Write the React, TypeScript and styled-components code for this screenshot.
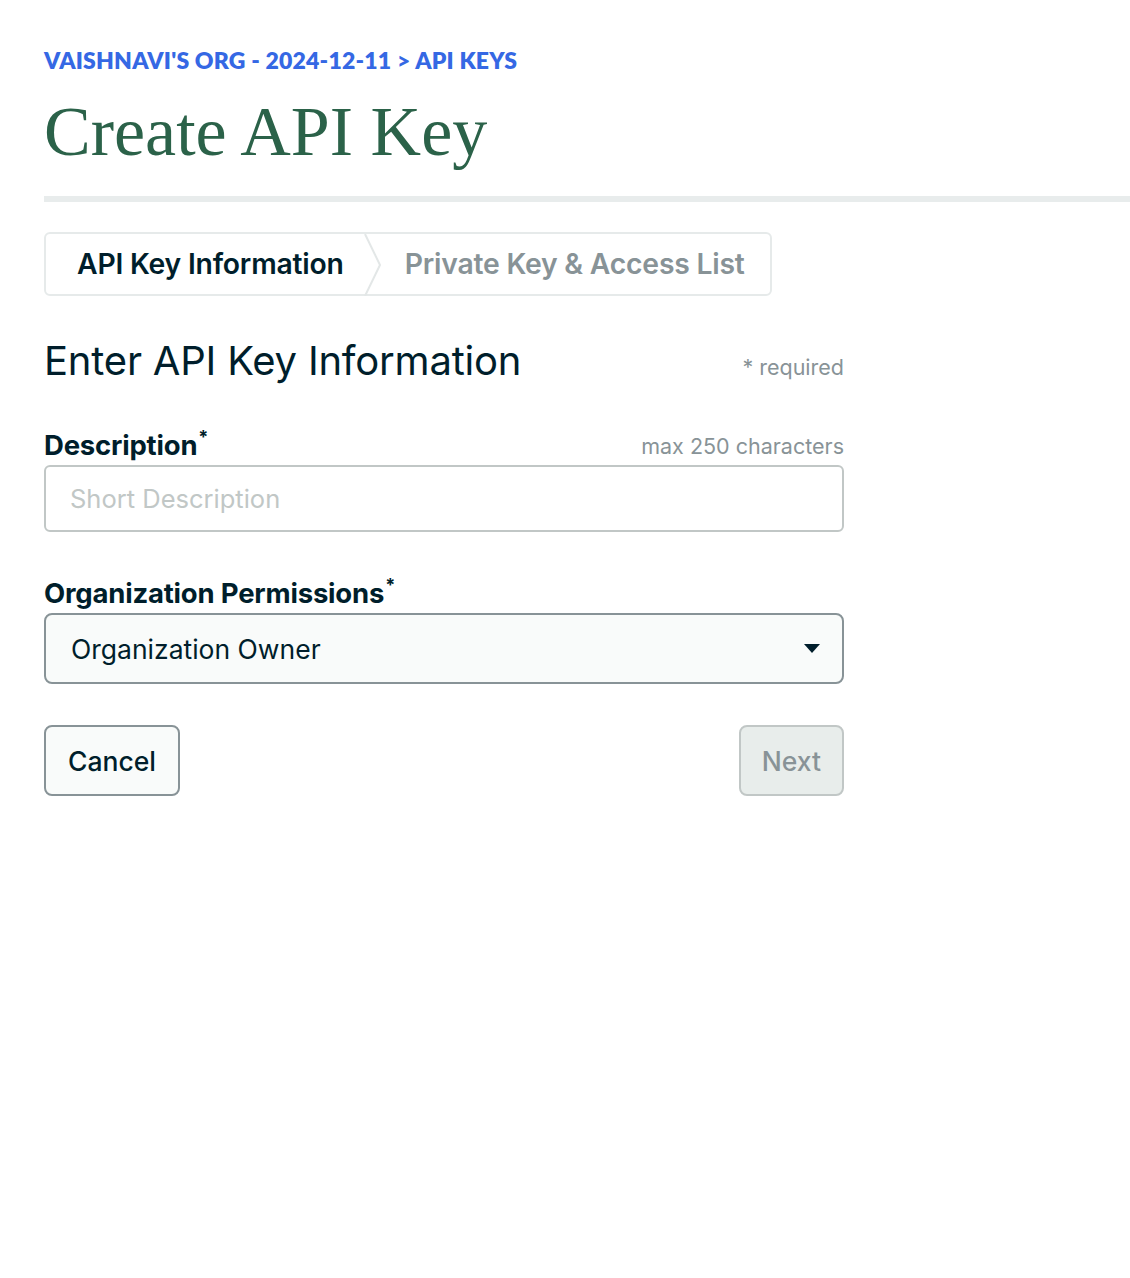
import React from "react";
import styled, { createGlobalStyle } from "styled-components";

const Global = createGlobalStyle`
  html, body { margin: 0; padding: 0; background: #fff; }
  body { font-family: "Inter", "Noto Sans", sans-serif; color: #001e2b; }
  * { box-sizing: border-box; }
`;

const Page = styled.div`
  padding: 44px 0 0 44px;
`;

const Breadcrumb = styled.div`
  font-family: "Lato", sans-serif;
  font-weight: 800;
  font-size: 23px;
  letter-spacing: 0.2px;
  color: #3568e4;
  line-height: 32px;
`;

const Title = styled.h1`
  margin: 16px 0 0 0;
  font-family: "Liberation Serif", serif;
  font-weight: 400;
  font-size: 70px;
  line-height: 80px;
  color: #2b6249;
`;

const Divider = styled.div`
  margin-top: 24px;
  height: 6px;
  background: #e8ecec;
`;

const Stepper = styled.div`
  margin-top: 30px;
  width: 728px;
  height: 64px;
  border: 2px solid #e6eaea;
  border-radius: 6px;
  display: flex;
  align-items: stretch;
`;

const Step = styled.div<{ $active?: boolean }>`
  display: flex;
  align-items: center;
  padding: 0 ${(p) => (p.$active ? "20px" : "30px")} 0 ${(p) => (p.$active ? "31px" : "23px")};
  font-size: 28.3px;
  font-weight: 600;
  letter-spacing: -0.2px;
  color: ${(p) => (p.$active ? "#001e2b" : "#889397")};
  white-space: nowrap;
`;

const Chevron = styled.svg`
  display: block;
  flex: none;
`;

const Form = styled.div`
  width: 800px;
  margin-top: 40px;
`;

const HeadRow = styled.div`
  display: flex;
  justify-content: space-between;
  align-items: flex-end;
`;

const Subtitle = styled.h2`
  margin: 0;
  font-size: 40px;
  font-weight: 400;
  line-height: 50px;
  letter-spacing: -0.2px;
  color: #001e2b;
`;

const Hint = styled.span<{ $pad?: number }>`
  font-size: 21.5px;
  color: #889397;
  padding-bottom: ${(p) => p.$pad ?? 0}px;
`;

const Field = styled.div<{ $top: number }>`
  margin-top: ${(p) => p.$top}px;
`;

const LabelRow = styled.div`
  display: flex;
  justify-content: space-between;
  align-items: flex-end;
  margin-bottom: 4px;
`;

const Label = styled.label`
  font-size: 27.5px;
  font-weight: 700;
  line-height: 32px;
  letter-spacing: -0.2px;
  color: #001e2b;
  sup {
    font-size: 18px;
    vertical-align: top;
    position: relative;
    top: -8px;
    margin-left: 1px;
  }
`;

const Input = styled.input`
  display: block;
  width: 100%;
  height: 67px;
  border: 2px solid #c1c7c6;
  border-radius: 6px;
  padding: 0 24px;
  font-family: "Inter", sans-serif;
  font-size: 25.5px;
  color: #001e2b;
  outline: none;
  &::placeholder { color: #c1c7c6; }
`;

const Select = styled.div`
  display: flex;
  align-items: center;
  justify-content: space-between;
  height: 71px;
  border: 2px solid #889397;
  border-radius: 8px;
  background: #f9fbfa;
  padding: 0 22px 0 25px;
  font-size: 26.5px;
  color: #001e2b;
`;

const Actions = styled.div`
  display: flex;
  justify-content: space-between;
  margin-top: 41px;
`;

const Button = styled.button<{ $disabled?: boolean }>`
  height: 71px;
  padding: 0 ${(p) => (p.$disabled ? "21px" : "22px")};
  border-radius: 8px;
  border: 2px solid ${(p) => (p.$disabled ? "#c1c7c6" : "#889397")};
  background: ${(p) => (p.$disabled ? "#e8edeb" : "#f9fbfa")};
  color: ${(p) => (p.$disabled ? "#889397" : "#001e2b")};
  font-family: "Inter", sans-serif;
  font-size: 26.5px;
  font-weight: 500;
`;

export default function App() {
  return (
    <>
      <Global />
      <Page>
        <Breadcrumb>VAISHNAVI'S ORG - 2024-12-11 &gt; API KEYS</Breadcrumb>
        <Title>Create API Key</Title>
        <Divider />
        <Stepper>
          <Step $active>API Key Information</Step>
          <Chevron width="18" height="62" viewBox="0 0 18 62">
            <polyline points="1,0 16,31 1,62" fill="none" stroke="#e3e7e7" strokeWidth="2" />
          </Chevron>
          <Step>Private Key &amp; Access List</Step>
        </Stepper>
        <Form>
          <HeadRow>
            <Subtitle>Enter API Key Information</Subtitle>
            <Hint $pad={6}>* required</Hint>
          </HeadRow>
          <Field $top={43}>
            <LabelRow>
              <Label>Description<sup>*</sup></Label>
              <Hint $pad={2}>max 250 characters</Hint>
            </LabelRow>
            <Input placeholder="Short Description" />
          </Field>
          <Field $top={45}>
            <LabelRow>
              <Label>Organization Permissions<sup>*</sup></Label>
            </LabelRow>
            <Select>
              <span>Organization Owner</span>
              <svg width="16" height="10" viewBox="0 0 16 10">
                <polygon points="0,0 16,0 8,9" fill="#001e2b" />
              </svg>
            </Select>
          </Field>
          <Actions>
            <Button>Cancel</Button>
            <Button $disabled>Next</Button>
          </Actions>
        </Form>
      </Page>
    </>
  );
}
